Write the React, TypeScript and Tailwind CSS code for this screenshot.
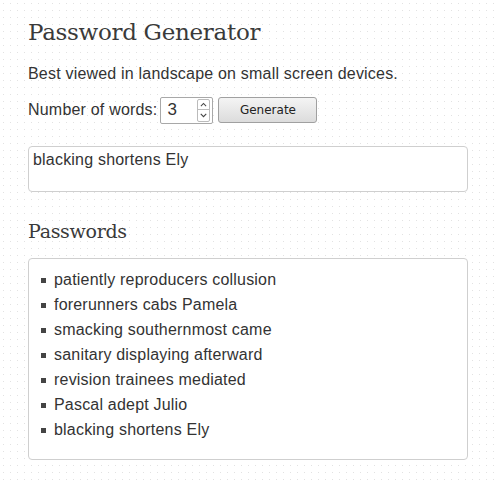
import React from "react";

const passwords = [
  "patiently reproducers collusion",
  "forerunners cabs Pamela",
  "smacking southernmost came",
  "sanitary displaying afterward",
  "revision trainees mediated",
  "Pascal adept Julio",
  "blacking shortens Ely",
];

export default function App() {
  return (
    <div className="w-[500px] h-[484px] bg-white bg-[radial-gradient(circle,#e2e2e2_0.5px,transparent_0.9px)] bg-[length:7px_7px] text-[#333] font-['Liberation_Sans',Arial,sans-serif] px-[28px] pt-[16px] overflow-hidden">
      <h1 className="font-['DejaVu_Serif',Georgia,serif] text-[23px] leading-[32px] text-[#3a3a3a] tracking-[-0.3px]">
        Password Generator
      </h1>
      <p className="mt-[16px] text-[16px] leading-[20px] text-[#333] tracking-[0.2px]">
        Best viewed in landscape on small screen devices.
      </p>
      <div className="mt-[12px] flex items-center h-[28px]">
        <span className="text-[16px] leading-[20px] tracking-[0.2px]">Number of words:</span>
        <div className="ml-[3px] w-[53px] h-[27px] border border-[#a8a8a8] rounded-[2px] bg-white flex items-center pl-[6px] pr-[2px]">
          <span className="text-[17px] flex-1">3</span>
          <div className="flex flex-col w-[13px] h-[23px] border border-[#bbb] rounded-[2px] text-[#555]">
            <svg viewBox="0 0 12 11" className="w-[11px] h-[11px] border-b border-[#bbb]">
              <path d="M3 7 L6 4 L9 7" fill="none" stroke="#444" strokeWidth="1.2" />
            </svg>
            <svg viewBox="0 0 12 11" className="w-[11px] h-[11px]">
              <path d="M3 4 L6 7 L9 4" fill="none" stroke="#444" strokeWidth="1.2" />
            </svg>
          </div>
        </div>
        <button className="ml-[5px] w-[99px] h-[26px] border border-[#a0a0a0] rounded-[3px] bg-[linear-gradient(#f4f4f4,#dcdcdc)] text-[12px] text-[#222] font-['DejaVu_Sans',sans-serif]">
          Generate
        </button>
      </div>
      <div className="mt-[22px] w-[440px] h-[46px] border border-[#cfcfcf] rounded-[4px] bg-white px-[4px] py-[3px] text-[16px] leading-[20px] tracking-[0.2px]">
        blacking shortens Ely
      </div>
      <h2 className="mt-[26px] font-['DejaVu_Serif',Georgia,serif] text-[19px] leading-[26px] text-[#3a3a3a] tracking-[-0.3px]">
        Passwords
      </h2>
      <div className="mt-[14px] w-[440px] h-[202px] border border-[#cfcfcf] rounded-[4px] bg-white pt-[8px] pl-[12px]">
        <ul className="flex flex-col">
          {passwords.map((p) => (
            <li key={p} className="flex items-center h-[25px] text-[16px] tracking-[0.2px]">
              <span className="w-[5px] h-[5px] bg-[#444] mr-[8px] mt-[2px]" />
              {p}
            </li>
          ))}
        </ul>
      </div>
    </div>
  );
}
